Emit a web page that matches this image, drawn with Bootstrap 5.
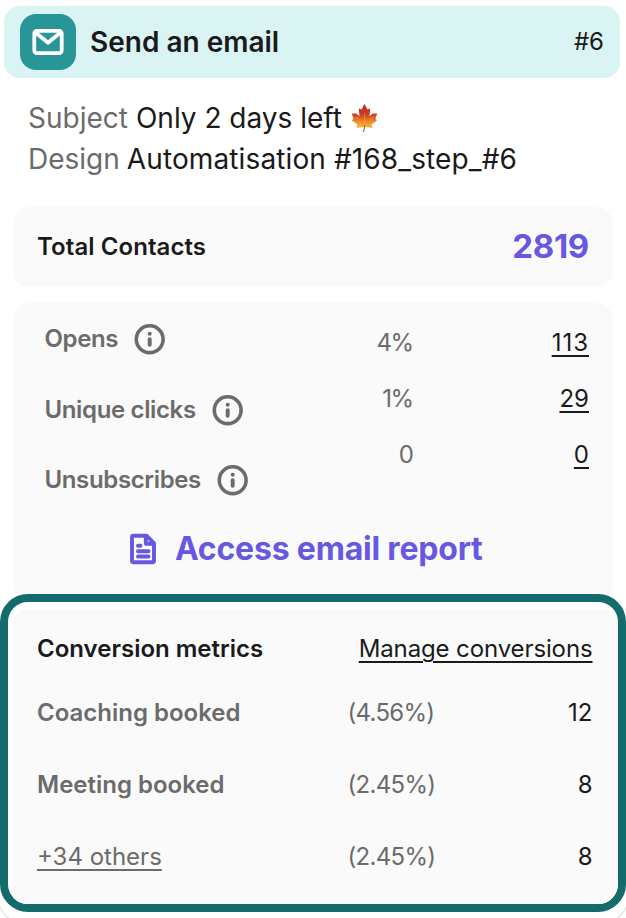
<!DOCTYPE html>
<html lang="en">
<head>
<meta charset="utf-8">
<meta name="viewport" content="width=device-width, initial-scale=1">
<title>Send an email</title>
<link href="https://cdn.jsdelivr.net/npm/bootstrap@5.3.0/dist/css/bootstrap.min.css" rel="stylesheet">
<style>
body{font-family:Inter,"Liberation Sans",sans-serif;font-size:24px;line-height:32px;color:#1a1a1a;background:#fff;height:918px;overflow:hidden}
svg{display:block;flex:none}
.ink{color:#1a1a1a}
.soft{color:#6b6b6b}
.violet{color:#6658e0}
.step-head{height:72px;margin:6px 6px 0 4px;padding:0 16px 0 16px;border-radius:16px;background:#daf4f3}
.step-icon{width:56px;height:56px;border-radius:16px;background:#289696}
.step-title{font-size:28px;margin-left:14px}
.details{margin:20px 28px 0;font-size:28px;line-height:41px}
.design-name{letter-spacing:.12px;margin-left:7px}
.panel{background:#fafafa;border-radius:16px;margin:0 13px}
.total{margin-top:27px;height:80px;padding:0 24px 0 24px}
.total-label{letter-spacing:.07px}
.total-count{font-size:33px;letter-spacing:-.3px;margin-top:-2px}
.stats{margin-top:16px;height:297px;padding:20px 24px 0 31.5px}
.stat-names{width:250px;row-gap:38.5px;letter-spacing:-.36px}
.stat-values{row-gap:24px;margin-top:4px}
.stat-rates{letter-spacing:-1.5px}
.stat-links{width:176.500px}
.stat-wide{letter-spacing:1px}
.report{font-size:32px;letter-spacing:-.2px;gap:18px;margin:37px 0 0 -22px}
.under{text-underline-offset:4px;text-decoration-thickness:2px}
.highlight{height:318px;margin-top:-6px;border:8px solid #136c6a;border-radius:28px;background:#fff;padding:7px 0 0 5px;overflow:hidden}
.conv{background:#fafafa;height:300px;border-radius:16px 16px 0 0;padding:24px 25.5px 0 24px}
.conv-row{height:32px;margin-bottom:40px}
.conv-head{margin-bottom:32px}
.conv-head .ink{letter-spacing:-.12px}
.conv-name{width:310.5px}
.conv-rate{letter-spacing:-.7px}
.frame-edge{left:-3px;right:-3px;bottom:-6px;height:60px;border:1.5px solid #dedede;border-top:0;border-radius:0 0 28px 28px;z-index:-1}
</style>
<script src="https://cdn.jsdelivr.net/npm/bootstrap@5.3.0/dist/js/bootstrap.bundle.min.js"></script>
</head>
<body class="position-relative">
<div class="d-flex flex-column">
  <header class="step-head d-flex align-items-center">
    <div class="step-icon d-flex align-items-center justify-content-center">
      <svg width="32" height="28" viewBox="0 0 32 28" fill="none" stroke="#fff" stroke-width="3.8" stroke-linejoin="round"><rect x="2.3" y="2.8" width="27.4" height="22.4" rx="2.6"/><path d="M3.500 4.500 16 14.800 28.500 4.500"/></svg>
    </div>
    <div class="step-title fw-semibold">Send an email</div>
    <div class="step-no ms-auto">#6</div>
  </header>

  <section class="details">
    <div class="d-flex align-items-center"><span class="soft">Subject</span><span class="ms-2">Only 2 days left</span>
      <svg class="ms-2" width="28" height="30" viewBox="-1 1 28 30">
        <defs><linearGradient id="leaf" x1="0" y1="0" x2="0" y2="1"><stop offset="0" stop-color="#b02a22"/><stop offset=".45" stop-color="#cf3f22"/><stop offset=".7" stop-color="#e98427"/><stop offset="1" stop-color="#f5bd45"/></linearGradient></defs>
        <path d="M13.500 1 16.500 6.500 19.300 5.500 18.500 13 22 10.500 26.300 10.500 24.400 15.500 26 17.500 20.500 21.500 21.500 25 14 24 13 24 5.500 25 6.500 21.500 .9 17.500 2.600 15.500 .7 10.500 5 10.500 8.500 13 7.700 5.500 10.500 6.500Z" fill="url(#leaf)"/>
        <path d="M13.500 10V24M13.500 24 5 14M13.500 24 22 14M13.500 24 4 18M13.500 24 23 18" stroke="#f0a53a" stroke-width=".6" fill="none"/>
        <path d="M13.500 22Q13.800 27 12 29" stroke="#a8653c" stroke-width="1.100" fill="none"/>
      </svg>
    </div>
    <div class="d-flex"><span class="soft">Design</span><span class="design-name">Automatisation #168_step_#6</span></div>
  </section>

  <section class="panel total d-flex align-items-center justify-content-between">
    <div class="total-label fw-semibold">Total Contacts</div>
    <div class="total-count fw-bold violet">2819</div>
  </section>

  <section class="panel stats">
    <div class="d-flex">
      <div class="stat-names d-grid fw-semibold soft">
        <div class="d-flex align-items-center gap-3"><span>Opens</span><svg width="32" height="32" viewBox="0 0 32 32"><use href="#info"/></svg></div>
        <div class="d-flex align-items-center gap-3"><span>Unique clicks</span><svg width="32" height="32" viewBox="0 0 32 32"><use href="#info"/></svg></div>
        <div class="d-flex align-items-center gap-3"><span>Unsubscribes</span><svg width="32" height="32" viewBox="0 0 32 32"><g id="info"><circle cx="15.700" cy="16.200" r="13.400" fill="none" stroke="currentColor" stroke-width="3.600"/><circle cx="15.700" cy="10.700" r="2" fill="currentColor"/><path d="M15.700 16.200V21.700" stroke="currentColor" stroke-width="3.900" stroke-linecap="round"/></g></svg></div>
      </div>
      <div class="stat-values stat-rates d-flex flex-column text-end soft flex-fill"><span>4%</span><span>1%</span><span>0</span></div>
      <div class="stat-values stat-links d-flex flex-column align-items-end"><a class="ink under stat-wide" href="#">113</a><a class="ink under" href="#">29</a><a class="ink under" href="#">0</a></div>
    </div>
    <a class="report d-flex align-items-center justify-content-center fw-bold violet text-decoration-none" href="#">
      <svg width="28" height="32" viewBox="-1 0 28 32" fill="none" stroke="currentColor" stroke-width="3.900" stroke-linejoin="round" stroke-linecap="round"><path d="M3.500 2.700H16.500L24 10.300V27.800Q24 29.300 22.500 29.300H3.500Q2 29.300 2 27.800V4.200Q2 2.700 3.500 2.700Z"/><path d="M15.800 3V10.800H23.500M8 12.700H10.500M8 18.200H18.500M8 23.500H18.500"/></svg>
      <span>Access email report</span>
    </a>
  </section>

  <section class="highlight">
    <div class="conv">
      <div class="conv-row conv-head d-flex justify-content-between"><span class="fw-semibold">Conversion metrics</span><a class="ink under" href="#">Manage conversions</a></div>
      <div class="conv-row d-flex"><span class="conv-name fw-semibold soft">Coaching booked</span><span class="conv-rate soft">(4.56%)</span><span class="ms-auto">12</span></div>
      <div class="conv-row d-flex"><span class="conv-name fw-semibold soft">Meeting booked</span><span class="conv-rate soft">(2.45%)</span><span class="ms-auto">8</span></div>
      <div class="conv-row d-flex"><span class="conv-name"><a class="soft under" href="#">+34 others</a></span><span class="conv-rate soft">(2.45%)</span><span class="ms-auto">8</span></div>
    </div>
  </section>
</div>
<div class="frame-edge position-absolute"></div>
</body>
</html>
